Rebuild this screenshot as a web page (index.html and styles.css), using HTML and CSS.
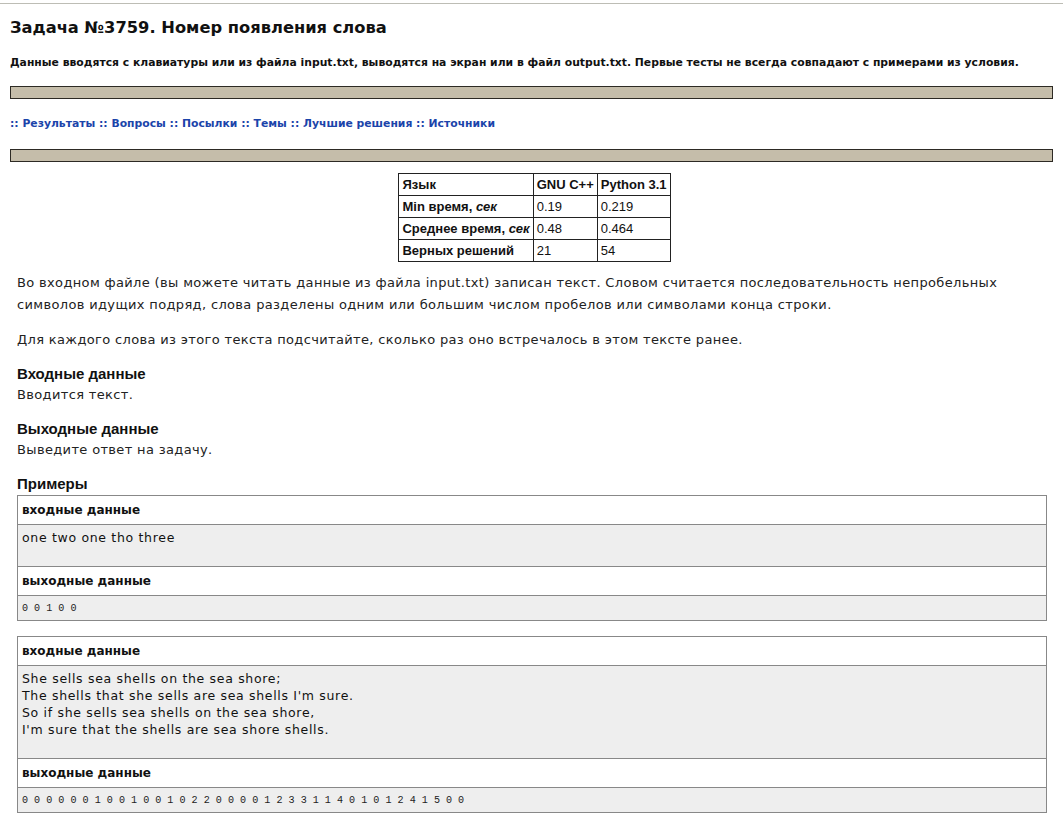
FILE: index.html
```html
<!DOCTYPE html>
<html lang="ru">
<head>
<meta charset="utf-8">
<title>Задача №3759. Номер появления слова</title>
<link rel="stylesheet" href="styles.css">
</head>
<body>
<div class="topline"></div>
<div class="page">
  <h1 class="title">Задача №3759. Номер появления слова</h1>
  <p class="notice">Данные вводятся с клавиатуры или из файла input.txt, выводятся на экран или в файл output.txt. Первые тесты не всегда совпадают с примерами из условия.</p>
  <div class="bar"></div>
  <nav class="links">:: <a href="#">Результаты</a> :: <a href="#">Вопросы</a> :: <a href="#">Посылки</a> :: <a href="#">Темы</a> :: <a href="#">Лучшие решения</a> :: <a href="#">Источники</a></nav>
  <div class="bar"></div>
  <div class="stats-wrap">
    <table class="stats">
      <tr><th>Язык</th><th>GNU C++</th><th>Python 3.1</th></tr>
      <tr><th>Min время, <i>сек</i></th><td>0.19</td><td>0.219</td></tr>
      <tr><th>Среднее время, <i>сек</i></th><td>0.48</td><td>0.464</td></tr>
      <tr><th>Верных решений</th><td>21</td><td>54</td></tr>
    </table>
  </div>
  <div class="statement">
    <p class="text">Во входном файле (вы можете читать данные из файла input.txt) записан текст. Словом считается последовательность непробельных символов идущих подряд, слова разделены одним или большим числом пробелов или символами конца строки.</p>
    <p class="text">Для каждого слова из этого текста подсчитайте, сколько раз оно встречалось в этом тексте ранее.</p>
    <h2 class="section">Входные данные</h2>
    <p class="text tight">Вводится текст.</p>
    <h2 class="section">Выходные данные</h2>
    <p class="text tight">Выведите ответ на задачу.</p>
    <h2 class="section examples">Примеры</h2>
    <div class="sample">
      <div class="sample-head">входные данные</div>
      <div class="sample-in">one two one tho three
&nbsp;</div>
      <div class="sample-head">выходные данные</div>
      <div class="sample-out">0 0 1 0 0</div>
    </div>
    <div class="sample">
      <div class="sample-head">входные данные</div>
      <div class="sample-in">She sells sea shells on the sea shore;
The shells that she sells are sea shells I'm sure.
So if she sells sea shells on the sea shore,
I'm sure that the shells are sea shore shells.
&nbsp;</div>
      <div class="sample-head">выходные данные</div>
      <div class="sample-out">0 0 0 0 0 0 1 0 0 1 0 0 1 0 2 2 0 0 0 0 1 2 3 3 1 1 4 0 1 0 1 2 4 1 5 0 0</div>
    </div>
  </div>
</div>
</body>
</html>
```

FILE: styles.css
```css
html, body {
  margin: 0;
  padding: 0;
  background: #ffffff;
}

body {
  font-family: "DejaVu Sans", Verdana, sans-serif;
  color: #111;
}

.topline {
  height: 3px;
  border-bottom: 1px solid #bdbdb5;
}

.page {
  padding: 0 10px;
}

.title {
  margin: 13px 0 0 0;
  font-size: 16.3px;
  line-height: 22px;
  font-weight: bold;
  color: #111;
}

.notice {
  margin: 17px 0 0 0;
  font-size: 10.8px;
  line-height: 14px;
  font-weight: bold;
  color: #111;
}

.bar {
  height: 11px;
  background: #c5bdaa;
  border: 1px solid #2d2a24;
}

.notice + .bar {
  margin-top: 16px;
}

.links {
  margin: 18px 0 18px 0;
  font-size: 10.8px;
  line-height: 14px;
  font-weight: bold;
  color: #1b44aa;
}

.links a {
  color: #1b44aa;
  text-decoration: none;
}

.stats-wrap {
  display: flex;
  justify-content: center;
  margin-top: 11px;
  padding-left: 6px;
}

.stats {
  border-collapse: collapse;
  font-family: "Liberation Sans", Arial, sans-serif;
  font-size: 13px;
  color: #111;
}

.stats th,
.stats td {
  border: 1px solid #222;
  padding: 3px;
  height: 15px;
  line-height: 15px;
  text-align: left;
  white-space: nowrap;
}

.stats th {
  font-weight: bold;
}

.stats td {
  font-weight: normal;
}

.stats i {
  font-style: italic;
}

.statement {
  padding: 0 6px 0 7px;
  margin-top: 10px;
}

.text {
  margin: 0 0 13px 0;
  font-size: 13px;
  letter-spacing: 0.35px;
  line-height: 22px;
  color: #222;
}

.text.tight {
  margin-bottom: 13px;
}

.section {
  margin: 0;
  font-family: "Liberation Sans", Arial, sans-serif;
  font-size: 15px;
  line-height: 20px;
  font-weight: bold;
  color: #111;
}

.section.examples {
  margin-bottom: 1px;
}

.sample {
  border: 1px solid #888;
  margin-bottom: 15px;
}

.sample-head {
  height: 28px;
  line-height: 28px;
  padding: 0 4px;
  font-size: 12px;
  font-weight: bold;
  color: #111;
  background: #fff;
}

.sample-in {
  white-space: pre;
  background: #eeeeee;
  border-top: 1px solid #888;
  border-bottom: 1px solid #888;
  padding: 4px 4px 3px 4px;
  font-family: "DejaVu Sans", Tahoma, sans-serif;
  font-size: 12.5px;
  letter-spacing: 0.68px;
  line-height: 17px;
  color: #111;
}

.sample-out {
  white-space: pre;
  background: #eeeeee;
  border-top: 1px solid #888;
  padding: 5px 4px 4px 4px;
  font-family: "Liberation Mono", "Courier New", monospace;
  font-size: 10.1px;
  line-height: 15px;
  color: #222;
}
```
